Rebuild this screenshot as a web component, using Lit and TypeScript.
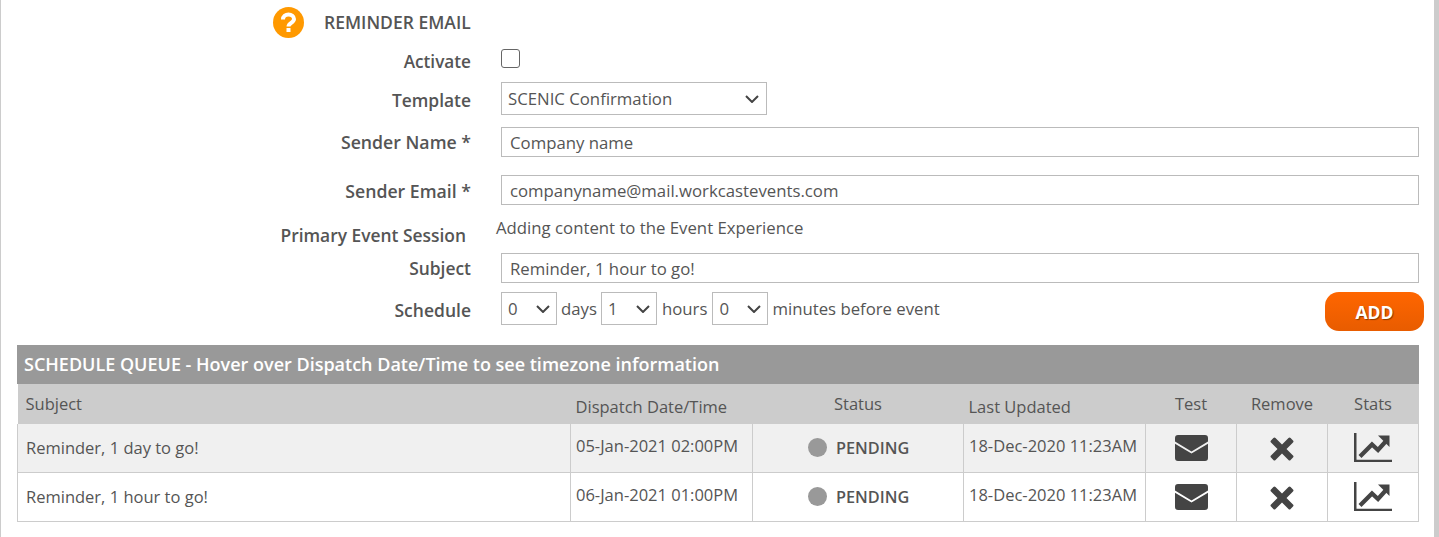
import { LitElement, html, css } from "lit";
import { customElement } from "lit/decorators.js";

const mail = html`<svg class="ic" width="33" height="26" viewBox="0 0 33 26"><path fill="#444" d="M3 0h27a3 3 0 0 1 3 3v3.600L16.500 16.400 0 6.600V3a3 3 0 0 1 3-3zM0 8.800 16.500 18.600 33 8.800V23a3 3 0 0 1-3 3H3a3 3 0 0 1-3-3z"/></svg>`;
const cross = html`<svg class="ic shift" width="24" height="24" viewBox="0 0 24 24"><path fill="#444" d="M5.500 1 12 7.500 18.500 1a1.500 1.500 0 0 1 2.100 0l2.400 2.400a1.500 1.500 0 0 1 0 2.100L16.500 12l6.500 6.500a1.500 1.500 0 0 1 0 2.100L20.600 23a1.500 1.500 0 0 1-2.100 0L12 16.500 5.500 23a1.500 1.500 0 0 1-2.100 0L1 20.600a1.500 1.500 0 0 1 0-2.100L7.500 12 1 5.500a1.500 1.500 0 0 1 0-2.100L3.400 1a1.500 1.500 0 0 1 2.100 0z"/></svg>`;
const stats = html`<svg class="ic" width="38" height="29" viewBox="0 0 38 29"><path fill="#444" d="M0 0h2.500v26.800H38V29H0z"/><path fill="none" stroke="#444" stroke-width="4.200" d="M6 23.500 18 11.500 24 17 33 7"/><path fill="#444" d="M24 2.500h11.500V14z"/></svg>`;

const rows = [
  ["Reminder, 1 day to go!", "05-Jan-2021 02:00PM"],
  ["Reminder, 1 hour to go!", "06-Jan-2021 01:00PM"],
];

@customElement("app-root")
export class AppRoot extends LitElement {
  static styles = css`
    :host {
      display: block;
      box-sizing: border-box;
      width: 1439px;
      height: 537px;
      overflow: hidden;
      background: #fff;
      border-left: 1px solid #ccc;
      border-right: 5px solid #ccc;
      font-family: "Open Sans", sans-serif;
      font-size: 16.750px;
      color: #555;
    }
    .form { display: flex; flex-direction: column; }
    .row {
      display: grid;
      grid-template-columns: 470px 918px;
      column-gap: 30px;
      align-items: center;
    }
    .label { text-align: right; font-weight: 600; font-size: 17.400px; color: #555; line-height: 22px; }
    .heading {
      height: 45px;
      display: flex;
      align-items: center;
      padding-left: 272px;
      gap: 20px;
      color: #555;
      font-weight: 600;
      font-size: 17.500px;
    }
    .heading span { margin-top: -2px; }
    .help { width: 31px; height: 31px; display: block; }
    .r-activate { height: 36px; }
    .r-activate .label { margin-top: -3px; font-size: 17.200px; }
    .check {
      appearance: none;
      width: 19px; height: 19px; margin: 0;
      box-sizing: border-box;
      border: 1px solid #666;
      border-radius: 3px;
      background: #fff;
      display: block;
      transform: translateY(-5px);
    }
    .r-template { height: 33px; margin-top: 1px; }
    .r-template .label { margin-top: 2px; }
    .r-template select { width: 266px; height: 33px; background-position: right 7px center; }
    .r-name { height: 30px; margin-top: 12px; }
    .r-name .label, .r-email .label { font-size: 17.700px; }
    .r-name .label { margin-top: 0; }
    .r-email .label { margin-top: 1px; }
    .r-subject .label { margin-top: 0; }
    .r-email { height: 30px; margin-top: 18px; }
    input.text {
      box-sizing: border-box;
      width: 918px; height: 30px;
      border: 1px solid #bbb;
      padding: 1px 8px 0;
      margin: 0;
      font: inherit;
      color: #555;
      background: #fff;
      outline: none;
    }
    select {
      appearance: none;
      font: inherit;
      color: #555;
      background: #fff url("data:image/svg+xml,%3Csvg xmlns='http://www.w3.org/2000/svg' width='14' height='8' viewBox='0 0 14 8'%3E%3Cpath d='M1 1l6 6 6-6' fill='none' stroke='%23444' stroke-width='2'/%3E%3C/svg%3E") no-repeat right 6px center;
      border: 1px solid #bbb;
      border-radius: 0;
      margin: 0;
      padding: 0 6px;
      box-sizing: border-box;
      display: block;
    }
    .r-primary { height: 48px; }
    .r-primary .label { padding-top: 12px; padding-right: 5px; }
    .r-primary .val { margin-left: -5px; margin-top: -4px; }
    .r-subject { height: 30px; }
    .r-schedule { height: 33px; margin-top: 9px; position: relative; }
    .r-schedule .label { margin-top: 2px; font-size: 17.500px; }
    .sched { display: flex; align-items: center; gap: 4px; white-space: nowrap; }
    .sched select { width: 56px; height: 33px; }
    .sched .hours { margin: 0 1px; }
    .add {
      position: absolute;
      left: 1324px;
      top: 0;
      width: 99px;
      height: 39px;
      border: none;
      border-radius: 14px;
      background: linear-gradient(#ff6600, #e85c00);
      color: #fff;
      font: 700 17.500px "Open Sans", sans-serif;
      text-shadow: 1px 1px 1px #8a3a00;
      padding: 0;
    }
    .cap {
      background: #999;
      color: #fff;
      width: 1402px;
      margin: 20px 0 0 16px;
      height: 39px;
      box-sizing: border-box;
      padding: 0 7px 2px;
      display: flex;
      align-items: center;
      font-size: 18px;
      font-weight: 600;
    }
    table {
      width: 1401px;
      margin: 0 0 0 16px;
      border-collapse: collapse;
      table-layout: fixed;
    }
    th {
      background: #ccc;
      font-weight: 400;
      font-size: 16.500px;
      height: 40px;
      box-sizing: border-box;
      padding: 0 0 2px;
      color: #555;
      text-align: center;
    }
    th.left { text-align: left; padding-left: 8px; }
    th.low { padding: 4px 0 0 5px; }
    td {
      height: 49px;
      padding: 0;
      box-sizing: border-box;
      border: 1px solid #ccc;
      color: #555;
      font-size: 16.500px;
    }
    tbody tr:first-child td { border-top: none; background: #f0f0f0; height: 48px; }
    .text-cell { padding-left: 5px; padding-bottom: 5px; }
    .subj { padding-left: 8px; padding-bottom: 0; }
    td.center { text-align: center; }
    .ic { display: block; margin: 0 auto; }
    .shift { margin-top: 2px; }
    .status {
      display: flex;
      align-items: center;
      gap: 9px;
      padding-left: 55px;
      font-weight: 600;
      font-size: 16.300px;
    }
    .dot { width: 19px; height: 19px; border-radius: 50%; background: #999; }
  `;

  render() {
    return html`
      <div class="form">
        <div class="heading">
          <svg class="help" viewBox="0 0 31 31">
            <circle cx="15.500" cy="15.500" r="15.500" fill="#ff9900"></circle>
            <path fill="none" stroke="#fff" stroke-width="4" d="M10 12.500c0-3 2.500-5 5.500-5s5.500 1.800 5.500 4.500c0 3.800-5.500 3.800-5.500 7.500"></path>
            <rect x="13.500" y="21" width="4" height="4" fill="#fff"></rect>
          </svg>
          <span>REMINDER EMAIL</span>
        </div>
        <div class="row r-activate">
          <div class="label">Activate</div>
          <div><input class="check" type="checkbox" /></div>
        </div>
        <div class="row r-template">
          <div class="label">Template</div>
          <div><select><option>SCENIC Confirmation</option></select></div>
        </div>
        <div class="row r-name">
          <div class="label">Sender Name *</div>
          <input class="text" value="Company name" />
        </div>
        <div class="row r-email">
          <div class="label">Sender Email *</div>
          <input class="text" value="companyname@mail.workcastevents.com" />
        </div>
        <div class="row r-primary">
          <div class="label">Primary Event Session</div>
          <div class="val">Adding content to the Event Experience</div>
        </div>
        <div class="row r-subject">
          <div class="label">Subject</div>
          <input class="text" value="Reminder, 1 hour to go!" />
        </div>
        <div class="row r-schedule">
          <div class="label">Schedule</div>
          <div class="sched">
            <select><option>0</option></select><span>days</span>
            <select><option>1</option></select><span class="hours">hours</span>
            <select><option>0</option></select><span>minutes before event</span>
          </div>
          <button class="add">ADD</button>
        </div>
      </div>
      <div class="cap">SCHEDULE QUEUE - Hover over Dispatch Date/Time to see timezone information</div>
      <table>
        <colgroup>
          <col style="width:553px" /><col style="width:182px" /><col style="width:211px" />
          <col style="width:182px" /><col style="width:91px" /><col style="width:91px" /><col style="width:91px" />
        </colgroup>
        <thead>
          <tr>
            <th class="left">Subject</th>
            <th class="left low">Dispatch Date/Time</th>
            <th>Status</th>
            <th class="left low">Last Updated</th>
            <th>Test</th>
            <th>Remove</th>
            <th>Stats</th>
          </tr>
        </thead>
        <tbody>
          ${rows.map(
            (r) => html`<tr>
              <td class="text-cell subj">${r[0]}</td>
              <td class="text-cell">${r[1]}</td>
              <td><div class="status"><span class="dot"></span>PENDING</div></td>
              <td class="text-cell">18-Dec-2020 11:23AM</td>
              <td class="center">${mail}</td>
              <td class="center">${cross}</td>
              <td class="center">${stats}</td>
            </tr>`
          )}
        </tbody>
      </table>
    `;
  }
}
